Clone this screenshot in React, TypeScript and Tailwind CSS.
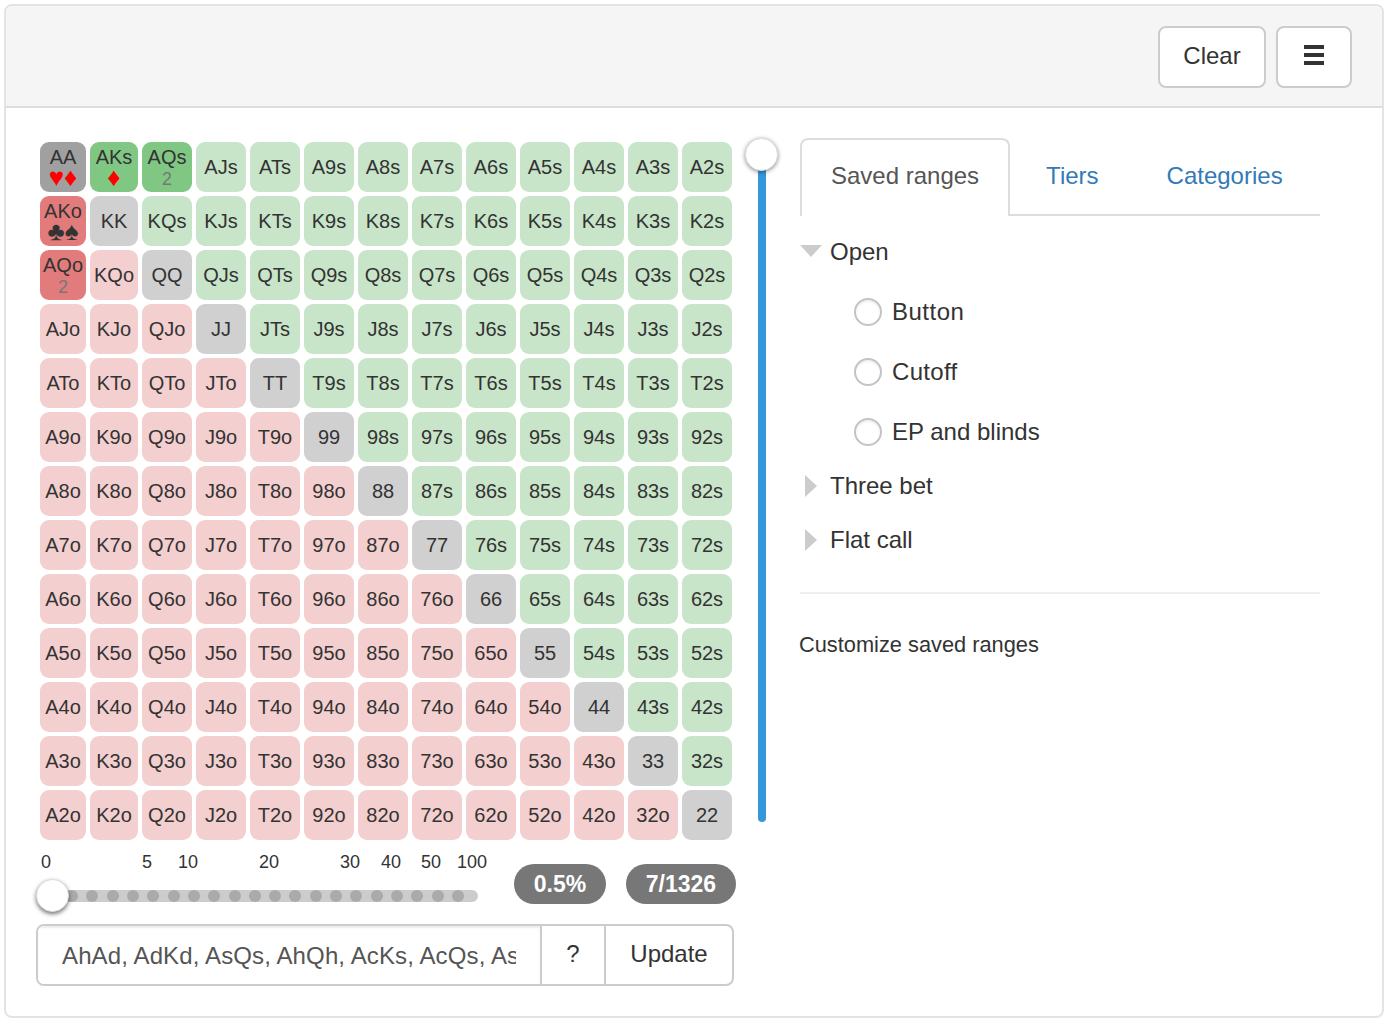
import React from "react";

const R = ["A", "K", "Q", "J", "T", "9", "8", "7", "6", "5", "4", "3", "2"];

type Extra = { bg: string; sub?: React.ReactNode };

const red = "text-[#ff0000]";
const extras: Record<string, Extra> = {
  AA: { bg: "bg-[#a0a0a0]", sub: <span className={red}>♥♦</span> },
  AKs: { bg: "bg-[#81c784]", sub: <span className={red}>♦</span> },
  AQs: { bg: "bg-[#81c784]", sub: <span className="mt-[3px] text-[18px] text-[#777]">2</span> },
  AKo: { bg: "bg-[#e27b7b]", sub: <span className="text-[#333]">♣♠</span> },
  AQo: { bg: "bg-[#e27b7b]", sub: <span className="mt-[3px] text-[18px] text-[#777]">2</span> },
};

function Cell({ r, c }: { r: number; c: number }) {
  const name = r === c ? R[r] + R[c] : r < c ? R[r] + R[c] + "s" : R[c] + R[r] + "o";
  const ex = extras[name];
  const bg = ex ? ex.bg : r === c ? "bg-[#d0d0d0]" : r < c ? "bg-[#c8e5c9]" : "bg-[#f4cfcf]";
  return (
    <div className={`${bg} flex h-[50px] flex-col items-center justify-center rounded-[9px] text-[20px] text-[#333] ${ex ? "pt-[1px] leading-[20px]" : "leading-[21px]"}`}>
      <span>{name}</span>
      {ex?.sub && <span className="flex h-[21px] items-center text-[26px] leading-[21px]">{ex.sub}</span>}
    </div>
  );
}

const ticks: [string, number][] = [
  ["0", 10],
  ["5", 111],
  ["10", 152],
  ["20", 233],
  ["30", 314],
  ["40", 355],
  ["50", 395],
  ["100", 436],
];

function HSlider() {
  return (
    <div className="relative h-[60px] w-[442px]">
      {ticks.map(([t, x]) => (
        <span key={t} className="absolute top-0 -translate-x-1/2 text-[18px] leading-[20px] text-[#333]" style={{ left: x }}>
          {t}
        </span>
      ))}
      <div className="absolute left-[16px] top-[38px] flex h-3 w-[426px] items-center justify-between rounded-full bg-[#ccc] pl-[14px] pr-[14px]">
        {Array.from({ length: 20 }, (_, i) => (
          <span key={i} className="h-3 w-3 rounded-full bg-[#aaa]" />
        ))}
      </div>
      <div className="absolute left-0 top-[27px] h-[33px] w-[33px] rounded-full border border-[#ddd] bg-white shadow-[0_2px_4px_rgba(0,0,0,0.55)]" />
    </div>
  );
}

function Radio({ label, track }: { label: string; track?: string }) {
  return (
    <div className="flex h-[60px] items-center pl-[54px]">
      <span className="h-[28px] w-[28px] rounded-full border-2 border-[#c4c4c4] bg-white shadow-[inset_0_2px_2px_rgba(0,0,0,0.06)]" />
      <span className={`ml-[10px] ${track ?? ""}`}>{label}</span>
    </div>
  );
}

function TreeRow({ open, label }: { open?: boolean; label: string }) {
  return (
    <div className="flex h-[54px] items-center">
      <span className="flex w-[30px] shrink-0 justify-start">
        {open ? (
          <svg width="22" height="12" viewBox="0 0 22 12" className="mt-[-2px]"><path d="M0 0h22L11 12z" fill="#ccc" /></svg>
        ) : (
          <svg width="12" height="22" viewBox="0 0 12 22" className="ml-[5px]"><path d="M0 0l12 11L0 22z" fill="#ccc" /></svg>
        )}
      </span>
      <span>{label}</span>
    </div>
  );
}

export default function App() {
  return (
    <div className="h-[1030px] w-[1390px] bg-white p-1 font-['Liberation_Sans',Arial,sans-serif] text-[24px] text-[#333]">
      <div className="h-[1014px] w-[1380px] overflow-hidden rounded-lg border-2 border-[#e3e3e3] bg-white">
        <div className="flex h-[102px] items-start justify-end gap-[10px] border-b-2 border-[#ddd] bg-[#f5f5f5] pr-[30px] pt-5">
          <button className="h-[62px] w-[108px] rounded-lg border-2 border-[#ccc] bg-white pb-[2px] text-[24px] text-[#333]">Clear</button>
          <button className="flex h-[62px] w-[76px] flex-col items-center justify-center gap-1 rounded-lg border-2 border-[#ccc] bg-white pb-[4px]">
            <span className="h-1 w-5 bg-[#333]" />
            <span className="h-1 w-5 bg-[#333]" />
            <span className="h-1 w-5 bg-[#333]" />
          </button>
        </div>

        <div className="flex pl-[30px]">
          <div className="w-[700px] shrink-0 pt-[34px]">
            <div className="ml-1 grid w-[692px] grid-cols-[46px_48px_repeat(11,50px)] gap-1">
              {R.map((_, r) => R.map((_, c) => <Cell key={`${r}-${c}`} r={r} c={c} />))}
            </div>
            <div className="mt-3 flex items-start">
              <HSlider />
              <div className="ml-9 mt-3 flex gap-5">
                <span className="flex h-10 w-[92px] items-center justify-center rounded-full bg-[#777] text-[23px] font-bold text-white">0.5%</span>
                <span className="flex h-10 w-[110px] items-center justify-center rounded-full bg-[#777] text-[23px] font-bold text-white">7/1326</span>
              </div>
            </div>
            <div className="mt-3 flex h-[62px] w-[698px] overflow-hidden rounded-lg border-2 border-[#ccc]">
              <input
                readOnly
                value="AhAd, AdKd, AsQs, AhQh, AcKs, AcQs, AsKs, AhKh, AdQd"
                className="w-[502px] bg-white px-6 pt-[2px] text-[24px] tracking-[0.13px] text-[#555] shadow-[inset_0_2px_2px_rgba(0,0,0,0.075)] outline-none"
              />
              <span className="flex w-[64px] items-center justify-center border-l-2 border-[#ccc] pb-[2px]">?</span>
              <span className="flex flex-1 items-center justify-center border-l-2 border-[#ccc] pb-[2px]">Update</span>
            </div>
          </div>

          <div className="relative ml-[22px] mt-[62px] h-[652px] w-2 shrink-0 rounded-b-md bg-[#3498db]">
            <div className="absolute -left-[13px] -top-[32px] h-[33px] w-[33px] rounded-full border border-[#ddd] bg-white shadow-[0_1px_4px_rgba(0,0,0,0.45)]" />
          </div>

          <div className="ml-[34px] w-[520px] shrink-0 pt-[30px]">
            <div className="flex h-[78px] border-b-2 border-[#ddd]">
              <div className="mr-1 h-[78px] rounded-t-lg border-2 border-b-0 border-[#ddd] bg-white px-[29px] pt-[19px] leading-[34px] text-[#555]">Saved ranges</div>
              <div className="mr-1 px-8 pt-[21px] leading-[34px] text-[#337ab7]">Tiers</div>
              <div className="px-8 pt-[21px] leading-[34px] text-[#337ab7]">Categories</div>
            </div>
            <div className="pt-[9px]">
              <TreeRow open label="Open" />
              <div className="mt-[3px]">
                <Radio label="Button" track="tracking-[0.5px]" />
                <Radio label="Cutoff" track="tracking-[0.3px]" />
                <Radio label="EP and blinds" />
              </div>
              <div className="mt-[-3px]">
                <TreeRow label="Three bet" />
                <TreeRow label="Flat call" />
              </div>
            </div>
            <div className="mt-[25px] h-0.5 bg-[#eee]" />
            <div className="ml-[-1px] mt-[38px] text-[21.8px] leading-[26px]">Customize saved ranges</div>
          </div>
        </div>
      </div>
    </div>
  );
}
